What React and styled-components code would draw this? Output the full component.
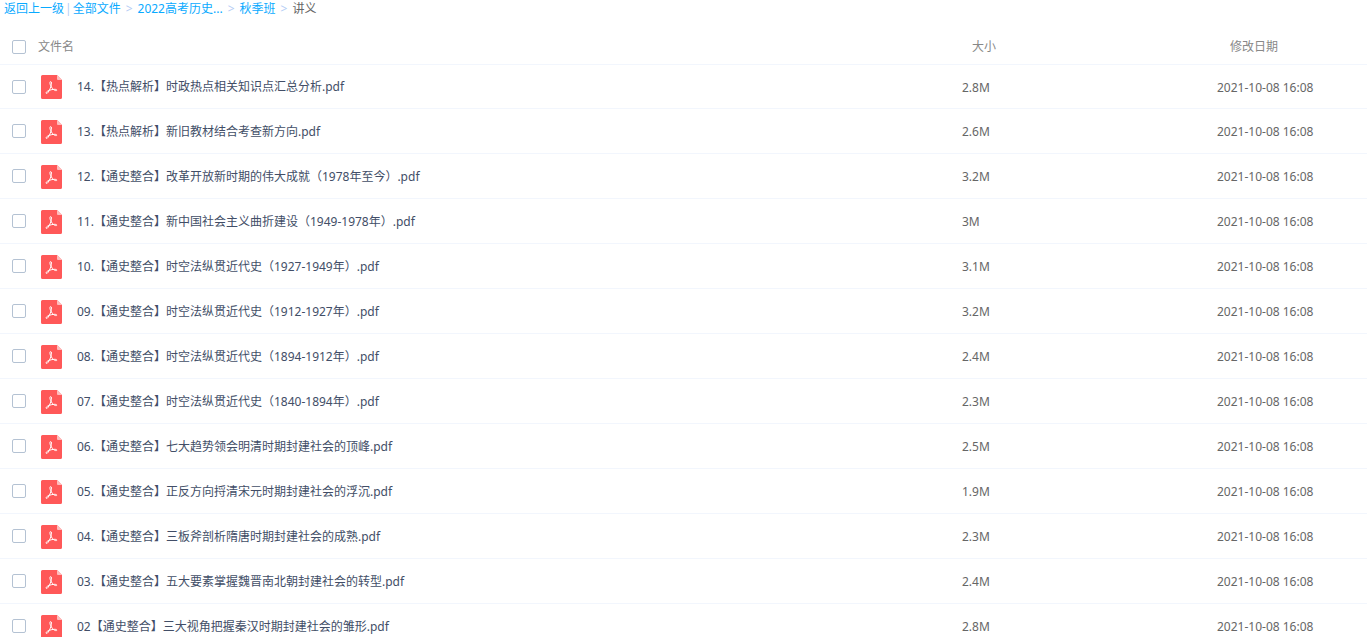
import React from "react";
import styled, { createGlobalStyle } from "styled-components";

const GlobalStyle = createGlobalStyle`
  *, *::before, *::after { box-sizing: border-box; }
  html { scrollbar-width: none; }
  body {
    margin: 0;
    background: #fff;
    color: #424e67;
    font: 12px/16px "Noto Sans", "Noto Sans CJK SC", sans-serif;
  }
`;

const Breadcrumb = styled.nav`
  display: flex;
  align-items: center;
  height: 28px;
  padding: 0 4px 11px;
  white-space: nowrap;
`;

const Crumb = styled.a`
  color: #09aaff;
  text-decoration: none;
`;

const Current = styled.span`
  color: #666;
`;

const Separator = styled.span`
  margin: 0 ${(p) => (p.$tight ? 1 : 5)}px;
  color: #b4cdf5;
`;

const Table = styled.table`
  width: 100%;
  table-layout: fixed;
  border-collapse: separate;
  border-spacing: 0;
`;

const CheckCol = styled.col`
  width: 38px;
`;

const SizeCol = styled.col`
  width: 255px;
`;

const DateCol = styled.col`
  width: 150px;
`;

const HeadCell = styled.th`
  height: 36px;
  padding: 2px 0 0 ${(p) => p.$inset || 0}px;
  color: #888;
  font-weight: 400;
  text-align: left;
  vertical-align: middle;
`;

const Cell = styled.td`
  height: 45px;
  padding: ${(p) => (p.$data ? 2 : 0)}px 0 0 ${(p) => p.$inset || 0}px;
  border-bottom: 1px solid #f2f6fd;
  color: ${(p) => (p.$data ? "#666" : "#424e67")};
  white-space: nowrap;
  vertical-align: middle;
`;

const Row = styled.tr`
  &:first-child ${Cell} {
    border-top: 1px solid #f2f6fd;
  }
`;

const Checkbox = styled.input`
  appearance: none;
  display: block;
  width: 14px;
  height: 14px;
  margin: 0;
  border: 1px solid #b4c2d3;
  border-radius: 2px;
  background: #fff;

  &:checked {
    border-color: #09aaff;
    background: #09aaff;
  }
`;

const FileLabel = styled.label`
  display: flex;
  align-items: center;
  gap: 15px;
  padding: 1px 0 0 3px;
`;

const Icon = styled.svg`
  display: block;
  flex: none;
  width: 21px;
  height: 24px;
`;

const PdfIcon = () => (
  <Icon viewBox="0 0 21 24" aria-hidden="true">
    <path d="M1.500 0H16L21 5V22.500a1.500 1.500 0 0 1-1.500 1.500H1.500a1.500 1.500 0 0 1-1.500-1.500V1.500A1.500 1.500 0 0 1 1.500 0Z" fill="#ff5858" />
    <path d="M16 0L21 5H17a1 1 0 0 1-1-1Z" fill="#ffbcbc" />
    <path
      d="M9.600 6.600c1.300 0 1 2.500.4 4.600C9.300 13.700 7.400 17.500 6.200 18.300c-.9.500-1.500-.3-.8-1.200 1.300-1.500 4.700-2.600 7.700-2.800 1.600-.1 2.800.3 2.700.9-.2.900-2.200.3-3.300-.7C11 13.200 9.600 11 9.100 9.100c-.3-1.500-.2-2.500.5-2.500Z"
      fill="none"
      stroke="#fff"
      strokeWidth="1"
      strokeLinejoin="round"
    />
  </Icon>
);

const MODIFIED = "2021-10-08 16:08";

const files = [
  ["14.【热点解析】时政热点相关知识点汇总分析.pdf", "2.8M"],
  ["13.【热点解析】新旧教材结合考查新方向.pdf", "2.6M"],
  ["12.【通史整合】改革开放新时期的伟大成就（1978年至今）.pdf", "3.2M"],
  ["11.【通史整合】新中国社会主义曲折建设（1949-1978年）.pdf", "3M"],
  ["10.【通史整合】时空法纵贯近代史（1927-1949年）.pdf", "3.1M"],
  ["09.【通史整合】时空法纵贯近代史（1912-1927年）.pdf", "3.2M"],
  ["08.【通史整合】时空法纵贯近代史（1894-1912年）.pdf", "2.4M"],
  ["07.【通史整合】时空法纵贯近代史（1840-1894年）.pdf", "2.3M"],
  ["06.【通史整合】七大趋势领会明清时期封建社会的顶峰.pdf", "2.5M"],
  ["05.【通史整合】正反方向捋清宋元时期封建社会的浮沉.pdf", "1.9M"],
  ["04.【通史整合】三板斧剖析隋唐时期封建社会的成熟.pdf", "2.3M"],
  ["03.【通史整合】五大要素掌握魏晋南北朝封建社会的转型.pdf", "2.4M"],
  ["02【通史整合】三大视角把握秦汉时期封建社会的雏形.pdf", "2.8M"],
];

export default function App() {
  return (
    <>
      <GlobalStyle />
      <Breadcrumb lang="zh-CN">
        <Crumb href="#up">返回上一级</Crumb>
        <Separator $tight>|</Separator>
        <Crumb href="#all">全部文件</Crumb>
        <Separator>&gt;</Separator>
        <Crumb href="#history">2022高考历史...</Crumb>
        <Separator>&gt;</Separator>
        <Crumb href="#autumn">秋季班</Crumb>
        <Separator>&gt;</Separator>
        <Current>讲义</Current>
      </Breadcrumb>
      <Table lang="zh-CN">
        <colgroup>
          <CheckCol />
          <col />
          <SizeCol />
          <DateCol />
        </colgroup>
        <thead>
          <tr>
            <HeadCell $inset={12}>
              <Checkbox type="checkbox" id="file-all" />
            </HeadCell>
            <HeadCell>
              <label htmlFor="file-all">文件名</label>
            </HeadCell>
            <HeadCell $inset={10}>大小</HeadCell>
            <HeadCell $inset={13}>修改日期</HeadCell>
          </tr>
        </thead>
        <tbody>
          {files.map(([name, size], i) => (
            <Row key={name}>
              <Cell $inset={12}>
                <Checkbox type="checkbox" id={`file-${i}`} />
              </Cell>
              <Cell>
                <FileLabel htmlFor={`file-${i}`}>
                  <PdfIcon />
                  {name}
                </FileLabel>
              </Cell>
              <Cell $data>{size}</Cell>
              <Cell $data>{MODIFIED}</Cell>
            </Row>
          ))}
        </tbody>
      </Table>
    </>
  );
}
